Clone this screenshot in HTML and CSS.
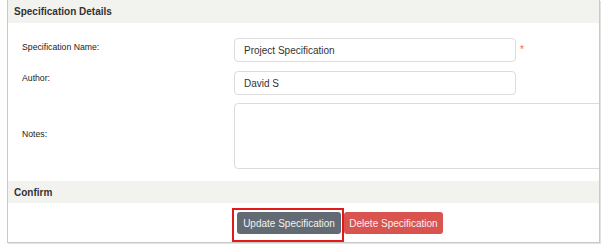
FILE: index.html
```html
<!DOCTYPE html>
<html>
<head>
<meta charset="utf-8">
<link rel="stylesheet" href="styles.css">
</head>
<body>
<div class="panel">
  <div class="panel-heading">Specification Details</div>
  <div class="form">
    <div class="row">
      <label class="label">Specification Name:</label>
      <div class="field">
        <div class="input">Project Specification</div>
        <span class="req">*</span>
      </div>
    </div>
    <div class="row">
      <label class="label label-author">Author:</label>
      <div class="field">
        <div class="input">David S</div>
      </div>
    </div>
    <div class="row row-notes">
      <label class="label label-mid">Notes:</label>
      <div class="field">
        <div class="textarea"></div>
      </div>
    </div>
  </div>
  <div class="panel-heading confirm">Confirm</div>
  <div class="actions">
    <span class="highlight"><button class="btn btn-update">Update Specification</button></span>
    <button class="btn btn-delete">Delete Specification</button>
  </div>
</div>
</body>
</html>
```

FILE: styles.css
```css
* { box-sizing: border-box; }
html, body { margin: 0; padding: 0; background: #fff; overflow: hidden; }
body {
  font-family: "Liberation Sans", Arial, sans-serif;
  color: #333;
  width: 602px;
  height: 246px;
}
.panel {
  margin-left: 7px;
  width: 593px;
  height: 243px;
  border: 1px solid #c9c9c9;
  border-top: none;
  box-shadow: 1px 1px 0 #e2e2e2;
  overflow: hidden;
}
.panel-heading {
  height: 23px;
  background: #f2f2ee;
  font-weight: bold;
  font-size: 10px;
  display: flex;
  align-items: center;
  padding-left: 6px;
  color: #333;
}
.form {
  padding: 15px 0 12px;
  display: flex;
  flex-direction: column;
  gap: 9px;
}
.row {
  display: grid;
  grid-template-columns: 226px 1fr;
}
.label {
  font-size: 8.7px;
  padding-left: 14px;
  padding-top: 4px;
  color: #222;
}
.label-author { padding-top: 2px; }
.label-mid { align-self: center; padding-top: 0; margin-top: -4px; }
.field { display: flex; align-items: flex-start; }
.input {
  width: 282px;
  height: 24px;
  border: 1px solid #dcdcdc;
  border-radius: 4px;
  padding-left: 9px;
  font-size: 10px;
  display: flex;
  align-items: center;
  color: #333;
}
.req {
  color: #f26a3d;
  font-size: 10px;
  margin-left: 4px;
  margin-top: 6px;
}
.row-notes { margin-top: -1px; }
.textarea {
  width: 380px;
  height: 66px;
  border: 1px solid #dcdcdc;
  border-radius: 4px;
}
.confirm { height: 22px; }
.actions {
  display: flex;
  align-items: flex-start;
  padding-left: 224px;
  padding-top: 5px;
}
.highlight {
  display: inline-flex;
  border: 2px solid #e01a1a;
  padding: 2px 1px 6px 3px;
}
.btn {
  font-family: "Liberation Sans", Arial, sans-serif;
  font-size: 10px;
  height: 22px;
  border: none;
  border-radius: 3px;
  padding: 0;
  white-space: nowrap;
  color: #f2f2f2;
  cursor: pointer;
}
.btn-update { background: #626b74; width: 104px; }
.btn-delete { background: #d9534f; width: 99px; margin-top: 4px; }
```
